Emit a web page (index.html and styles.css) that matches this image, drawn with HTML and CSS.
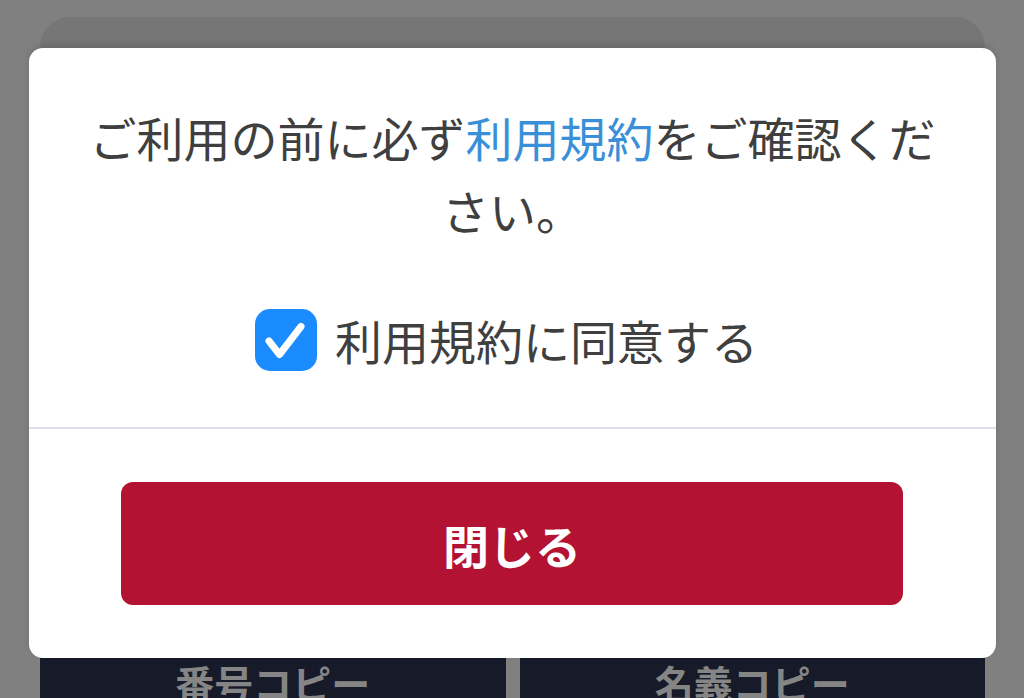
FILE: index.html
```html
<!DOCTYPE html>
<html lang="ja">
<head>
<meta charset="utf-8">
<link rel="stylesheet" href="styles.css">
</head>
<body>
<div class="page">
  <div class="card"></div>
  <div class="actions">
    <div class="action">番号コピー</div>
    <div class="action">名義コピー</div>
  </div>
</div>
<div class="overlay">
  <div class="modal">
    <div class="body">
      <p class="message">ご利用の前に必ず<a class="link" href="#">利用規約</a>をご確認ください。</p>
      <label class="agree">
        <span class="checkbox">
          <svg viewBox="0 0 62 62" width="62" height="62"><path d="M14 32 L24.5 45.5 L46 17.5" fill="none" stroke="#fff" stroke-width="7" stroke-linecap="round" stroke-linejoin="round"/></svg>
        </span>
        <span class="agree-text">利用規約に同意する</span>
      </label>
    </div>
    <div class="footer">
      <button class="close">閉じる</button>
    </div>
  </div>
</div>
</body>
</html>
```
FILE: styles.css
```css
html, body {
  margin: 0;
  padding: 0;
}
body {
  width: 1024px;
  height: 698px;
  overflow: hidden;
  background: #808080;
  font-family: "Noto Sans CJK JP", "Noto Sans", sans-serif;
  position: relative;
}
.page {
  display: flex;
  flex-direction: column;
  padding: 17px 39px 0 40px;
  height: 698px;
  box-sizing: border-box;
}
.card {
  height: 641px;
  flex: none;
  background: #767676;
  border-radius: 30px 30px 0 0;
}
.actions {
  display: grid;
  grid-template-columns: 1fr 1fr;
  gap: 14px;
  flex: 1;
}
.action {
  background: #171b29;
  color: #858585;
  font-weight: 700;
  font-size: 39px;
  text-align: center;
  line-height: 48px;
  padding-top: 0;
}
.overlay {
  position: absolute;
  left: 0;
  top: 0;
  width: 1024px;
  height: 698px;
}
.modal {
  position: absolute;
  left: 29px;
  top: 48px;
  width: 967px;
  height: 610px;
  background: #fff;
  border-radius: 14px;
  box-shadow: 0 -3px 6px rgba(0,0,0,0.12);
  display: flex;
  flex-direction: column;
}
.body {
  padding: 52px 40px 0;
  border-bottom: 2px solid #dde0e6;
  height: 381px;
  box-sizing: border-box;
  display: flex;
  flex-direction: column;
  align-items: center;
}
.message {
  margin: 0;
  width: 880px;
  text-align: center;
  font-size: 47px;
  line-height: 73px;
  color: #3f3f3f;
}
.link {
  color: #3a8fd9;
  text-decoration: none;
}
.agree {
  margin-top: 63px;
  display: flex;
  align-items: center;
  gap: 18px;
  padding-right: 12px;
}
.checkbox {
  width: 62px;
  height: 62px;
  border-radius: 15px;
  background: #1a8cff;
  display: block;
}
.checkbox svg {
  display: block;
}
.agree-text {
  font-size: 47px;
  color: #3f3f3f;
  line-height: 62px;
}
.footer {
  padding: 53px 93px 53px 92px;
  flex: 1;
  display: flex;
}
.close {
  flex: 1;
  border: none;
  border-radius: 12px;
  background: #b41232;
  color: #fff;
  font-family: "Noto Sans CJK JP", "Noto Sans", sans-serif;
  font-weight: 700;
  font-size: 46px;
  padding: 0;
}
```
